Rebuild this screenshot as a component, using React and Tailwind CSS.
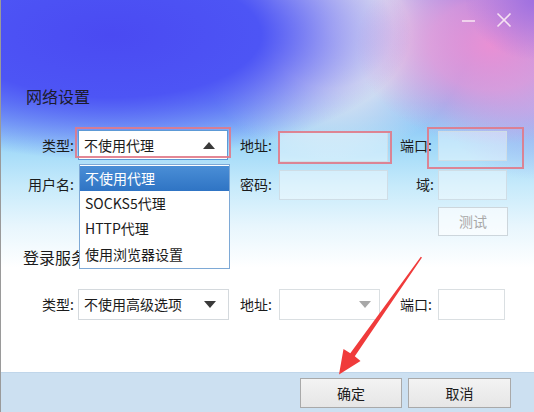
import React from "react";

const font = "font-['Microsoft_YaHei','Noto_Sans_CJK_SC','Noto_Sans',sans-serif]";

function Label({ w, children, align = "text-right" }) {
  return <div className={`${w} ${align} shrink-0 text-[14px] text-[#1b1b1b]`}>{children}</div>;
}

function Input({ w, className = "" }) {
  return <div className={`${w} h-[30px] shrink-0 border border-[#cfdde6] bg-white/40 ${className}`} />;
}

function Triangle({ up = false, color = "#3a3a3a" }) {
  return (
    <svg width="12" height="7" viewBox="0 0 12 7" className="shrink-0">
      {up ? <polygon points="0,7 12,7 6,0" fill={color} /> : <polygon points="0,0 12,0 6,7" fill={color} />}
    </svg>
  );
}

export default function App() {
  return (
    <div
      className={`${font} relative w-[534px] h-[412px] overflow-hidden flex flex-col border-l border-[#9a9a9a] bg-[image:radial-gradient(ellipse_300px_125px_at_110px_35px,#4a4af2_0%,#4d55f5_50%,rgba(80,100,246,0)_100%),radial-gradient(ellipse_70px_60px_at_534px_0px,#a070e0_0%,rgba(160,112,224,0)_100%),radial-gradient(ellipse_135px_100px_at_490px_45px,#e990d4_0%,rgba(235,150,214,0.75)_45%,rgba(235,160,216,0)_100%),radial-gradient(ellipse_140px_130px_at_330px_30px,#f6f2f0_0%,rgba(246,242,240,0.85)_45%,rgba(246,242,240,0)_100%),radial-gradient(ellipse_90px_70px_at_534px_110px,#a8b2f2_0%,rgba(168,178,242,0)_100%),linear-gradient(to_bottom,#6a7cf0_0%,#84b8f6_25%,#9ed8f8_35%,#c6eafb_45%,#e8f6fd_55%,#ffffff_65%)]`}
    >
      {/* window controls */}
      <div className="absolute top-[12px] right-[22px] flex items-center gap-[20px]">
        <svg width="15" height="15" viewBox="0 0 15 15">
          <line x1="1" y1="8" x2="14" y2="8" stroke="#f6e2f2" strokeWidth="1.6" />
        </svg>
        <svg width="16" height="16" viewBox="0 0 16 16">
          <line x1="1.5" y1="1.5" x2="14.5" y2="14.5" stroke="#f6e2f2" strokeWidth="1.6" />
          <line x1="14.5" y1="1.5" x2="1.5" y2="14.5" stroke="#f6e2f2" strokeWidth="1.6" />
        </svg>
      </div>

      <div className="h-[372px] flex flex-col">
        <div className="pt-[85px] pl-[25px] text-[16px] text-[#1b1b2b] leading-[22px]">网络设置</div>

        {/* row 1 */}
        <div className="mt-[22px] flex items-center h-[32px]">
          <Label w="w-[73px]">类型:</Label>
          <div className="ml-[4px] w-[150px] h-[30px] shrink-0 border border-[#5d9ad6] bg-white flex items-center justify-between pl-[5px] pr-[12px] text-[14px] text-[#1b1b1b]">
            <span>不使用代理</span>
            <Triangle up />
          </div>
          <Label w="ml-[12px] w-[39px]" align="text-left">地址:</Label>
          <Input w="w-[109px]" className="mt-[3px]" />
          <Label w="w-[47px]" align="text-left pl-[12px]">端口:</Label>
          <Input w="ml-[3px] w-[69px]" className="mt-[1px]" />
        </div>

        {/* row 2 */}
        <div className="mt-[8px] flex items-center h-[31px]">
          <Label w="w-[73px]">用户名:</Label>
          <div className="ml-[4px] w-[150px] shrink-0" />
          <Label w="ml-[12px] w-[39px]" align="text-left">密码:</Label>
          <Input w="w-[109px]" />
          <Label w="w-[46px]">域:</Label>
          <Input w="ml-[4px] w-[69px]" />
        </div>

        {/* test button */}
        <div className="mt-[7px] flex justify-start pl-[437px]">
          <div className="w-[70px] h-[29px] border border-[#cdd6dc] bg-white/60 flex items-center justify-center text-[14px] text-[#a8a8a8]">
            测试
          </div>
        </div>

        <div className="mt-[10px] pl-[22px] text-[16px] leading-[22px] text-[#1b1b1b]">登录服务器设置</div>

        {/* row 3 */}
        <div className="mt-[21px] flex items-center h-[31px]">
          <Label w="w-[73px]">类型:</Label>
          <div className="ml-[4px] w-[151px] h-[31px] shrink-0 border border-[#d4d9dd] bg-white flex items-center justify-between pl-[5px] pr-[12px] text-[14px] text-[#1b1b1b]">
            <span>不使用高级选项</span>
            <Triangle />
          </div>
          <Label w="ml-[11px] w-[39px]" align="text-left">地址:</Label>
          <div className="w-[101px] h-[31px] shrink-0 border border-[#dadfe2] bg-white flex items-center justify-end pr-[8px]">
            <Triangle color="#a8a8a8" />
          </div>
          <Label w="w-[55px]" align="text-left pl-[20px]">端口:</Label>
          <div className="ml-[3px] w-[67px] h-[31px] shrink-0 border border-[#dadfe2] bg-white" />
        </div>
      </div>

      {/* bottom bar */}
      <div className="h-[40px] bg-[#cce0f1] border-t border-[#c0d6ea] flex items-start justify-end pr-[23px] pt-[5px] gap-[6px]">
        <button className="w-[102px] h-[30px] border border-[#a9a9a9] bg-[linear-gradient(to_bottom,#f3f3f3,#e6e6e6)] text-[14px] text-[#1b1b1b]">确定</button>
        <button className="w-[103px] h-[30px] border border-[#a9a9a9] bg-[linear-gradient(to_bottom,#f3f3f3,#e6e6e6)] text-[14px] text-[#1b1b1b]">取消</button>
      </div>

      {/* dropdown list */}
      <div className="absolute left-[78px] top-[164px] w-[151px] border border-[#7ea9d6] bg-white py-[1px] text-[14px] text-[#1b1b1b]">
        <div className="h-[25px] flex items-center pl-[5px] bg-[linear-gradient(to_bottom,#4a8ed6,#2f74c4)] text-white">不使用代理</div>
        <div className="h-[25px] flex items-center pl-[5px]">SOCKS5代理</div>
        <div className="h-[25px] flex items-center pl-[5px]">HTTP代理</div>
        <div className="h-[26px] flex items-center pl-[5px]">使用浏览器设置</div>
      </div>

      {/* red annotation boxes */}
      <div className="absolute left-[74px] top-[127px] w-[156px] h-[31px] border-2 border-[#e07a8a]/90" />
      <div className="absolute left-[277px] top-[131px] w-[114px] h-[33px] border-2 border-[#e07a8a]/90" />
      <div className="absolute left-[426px] top-[127px] w-[97px] h-[42px] border-2 border-[#e07a8a]/90" />

      {/* red arrow */}
      <svg className="absolute left-0 top-0 pointer-events-none" width="534" height="412" viewBox="0 0 534 412">
        <polygon points="421,257.6 353.8,356.2 359.5,361 338,374.5 342.5,349 349.3,353.2 419.8,256.8" fill="#f03b3b" />
      </svg>
    </div>
  );
}
